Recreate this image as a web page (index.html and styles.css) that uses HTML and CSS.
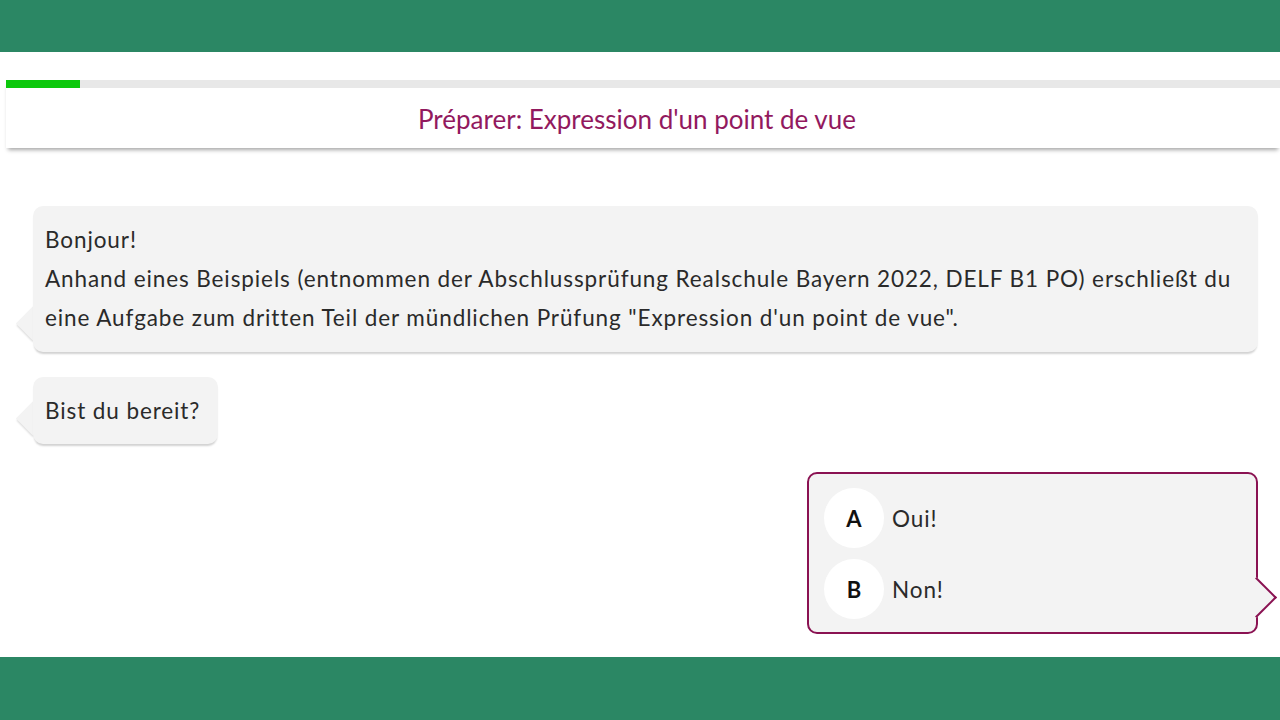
FILE: index.html
```html
<!DOCTYPE html>
<html lang="de">
<head>
    <meta charset="UTF-8">
    <meta name="viewport" content="width=device-width, initial-scale=1.0">
    <title>Préparer: Expression d'un point de vue</title>
    <link rel="stylesheet" href="styles.css">
</head>
<body>
    <div class="page">
        <div class="top-bar"></div>

        <div class="main">
            <!-- Kopfzeile mit Fortschritt -->
            <div class="header">
                <div class="progress">
                    <div class="progress-fill" style="width: 5.8%"></div>
                </div>
                <h1 class="title">Préparer: Expression d'un point de vue</h1>
            </div>

            <div class="chat">
                <div class="bubble bubble-left">
                    Bonjour!<br>
                    Anhand eines Beispiels (entnommen der Abschlussprüfung Realschule Bayern 2022, DELF B1 PO) erschließt du eine Aufgabe zum dritten Teil der mündlichen Prüfung "Expression d'un point de vue".
                </div>

                <div class="bubble bubble-left bubble-short">Bist du bereit?</div>

                <div class="answers">
                    <div class="answer">
                        <span class="answer-key">A</span>
                        <span class="answer-text">Oui!</span>
                    </div>
                    <div class="answer">
                        <span class="answer-key">B</span>
                        <span class="answer-text">Non!</span>
                    </div>
                </div>
            </div>
        </div>

        <div class="bottom-bar"></div>
    </div>
</body>
</html>
```

FILE: styles.css
```css
* {
    margin: 0;
    padding: 0;
    box-sizing: border-box;
}

body {
    font-family: Lato, "Open Sans", Arial, sans-serif;
    background: white;
    color: #2a2a2a;
}

.page {
    display: flex;
    flex-direction: column;
    height: 100vh;
    overflow: hidden;
}

.top-bar {
    height: 52px;
    background: #2b8764;
    flex-shrink: 0;
}

.bottom-bar {
    height: 63px;
    background: #2b8764;
    flex-shrink: 0;
}

.main {
    flex: 1;
}

.header {
    margin: 28px 0 0 6px;
    background: white;
    box-shadow: 0 4px 4px -2px rgba(0, 0, 0, 0.35);
}

.progress {
    height: 8px;
    background: #e8e8e8;
}

.progress-fill {
    height: 100%;
    background: #0cc80c;
}

.title {
    height: 60px;
    line-height: 62px;
    text-align: center;
    padding-right: 12px;
    font-size: 26px;
    font-weight: normal;
    color: #92195e;
}

.chat {
    padding: 58px 22px 0 33px;
    display: flex;
    flex-direction: column;
    align-items: flex-start;
}

.bubble {
    position: relative;
    background: #f3f3f3;
    border-radius: 10px;
    font-size: 22.5px;
    letter-spacing: 0.9px;
    line-height: 39px;
    padding: 14px 12px 15px 12px;
    box-shadow: 0 3px 2px -1px rgba(0, 0, 0, 0.18);
    margin-bottom: 25px;
}

/* Sprechblasen-Spitze links */
.bubble-left::before {
    content: '';
    position: absolute;
    left: -12.5px;
    bottom: 16.5px;
    width: 25px;
    height: 25px;
    background: #f3f3f3;
    transform: rotate(45deg);
    box-shadow: 1px 2px 2px -1px rgba(0, 0, 0, 0.15);
    z-index: -1;
}

.bubble-short {
    padding: 14px 18px 14px 12px;
}

.bubble-short::before {
    bottom: 13px;
}

.answers {
    position: relative;
    align-self: flex-end;
    width: 451px;
    margin-top: 3px;
    background: #f3f3f3;
    border: 2px solid #8a1252;
    border-radius: 10px;
    padding: 14px 16px 13px 15px;
    display: flex;
    flex-direction: column;
    gap: 11px;
}

/* Sprechblasen-Spitze rechts */
.answers::after {
    content: '';
    position: absolute;
    right: -14.5px;
    bottom: 20.5px;
    width: 27px;
    height: 27px;
    background: #f3f3f3;
    border-top: 2px solid #8a1252;
    border-right: 2px solid #8a1252;
    transform: rotate(45deg);
}

.answer {
    display: flex;
    align-items: center;
    gap: 8px;
}

.answer-key {
    width: 60px;
    height: 60px;
    border-radius: 50%;
    background: white;
    display: flex;
    justify-content: center;
    align-items: center;
    font-size: 22px;
    font-weight: bold;
    color: #111;
}

.answer-text {
    font-size: 22.5px;
    letter-spacing: 0.9px;
    color: #2a2a2a;
}
```
